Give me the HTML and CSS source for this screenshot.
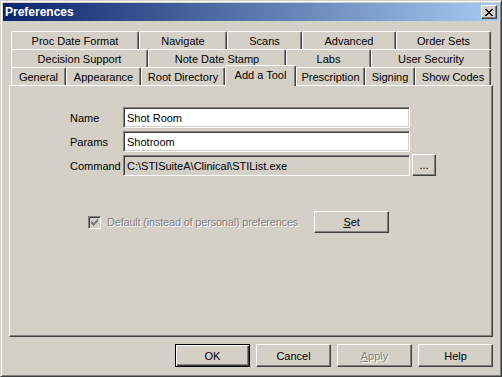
FILE: index.html
```html
<!DOCTYPE html>
<html lang="en">
<head>
  <meta charset="UTF-8" />
  <title>Preferences</title>
  <link rel="stylesheet" href="styles.css">
</head>
<body>

<div class="window">
  <div class="titlebar">
    <span class="title">Preferences</span>
    <button class="close" title="Close">
      <svg width="8" height="7" viewBox="0 0 8 7" shape-rendering="crispEdges">
        <path fill="#000" d="M0 0h2v1H0zM6 0h2v1H6zM1 1h2v1H1zM5 1h2v1H5zM2 2h4v1H2zM3 3h2v1H3zM2 4h4v1H2zM1 5h2v1H1zM5 5h2v1H5zM0 6h2v1H0zM6 6h2v1H6z"/>
      </svg>
    </button>
  </div>

  <div class="content">
    <!-- tab rows, back to front -->
    <div class="tabs">
      <div class="tab-row row1">
        <div class="tab">Proc Date Format</div>
        <div class="tab">Navigate</div>
        <div class="tab">Scans</div>
        <div class="tab">Advanced</div>
        <div class="tab">Order Sets</div>
      </div>
      <div class="tab-row row2">
        <div class="tab">Decision Support</div>
        <div class="tab">Note Date Stamp</div>
        <div class="tab">Labs</div>
        <div class="tab">User Security</div>
      </div>
      <div class="tab-row row3">
        <div class="tab">General</div>
        <div class="tab">Appearance</div>
        <div class="tab">Root Directory</div>
        <div class="tab selected">Add a Tool</div>
        <div class="tab">Prescription</div>
        <div class="tab">Signing</div>
        <div class="tab">Show Codes</div>
      </div>
    </div>

    <div class="panel">
      <div class="fields">
        <label for="toolName">Name</label>
        <input type="text" id="toolName" value="Shot Room" />
        <span></span>

        <label for="toolParams">Params</label>
        <input type="text" id="toolParams" value="Shotroom" />
        <span></span>

        <label for="toolCommand">Command</label>
        <input type="text" id="toolCommand" class="readonly" value="C:\STISuiteA\Clinical\STIList.exe" readonly />
        <button class="btn browse">...</button>
      </div>

      <div class="options">
        <label class="check disabled">
          <span class="box">
            <svg width="7" height="7" viewBox="0 0 7 7" shape-rendering="crispEdges">
              <path fill="#808080" d="M6 0h1v3H6zM5 1h1v3H5zM4 2h1v3H4zM0 2h1v3H0zM1 3h1v3H1zM2 4h1v3H2zM3 3h1v3H3z"/>
            </svg>
          </span>
          Default (instead of personal) preferences
        </label>
        <button class="btn set"><u>S</u>et</button>
      </div>
    </div>

    <div class="actions">
      <button class="btn default">OK</button>
      <button class="btn">Cancel</button>
      <button class="btn" disabled><u>A</u>pply</button>
      <button class="btn">Help</button>
    </div>
  </div>
</div>

</body>
</html>
```

FILE: styles.css
```css
body {
  margin: 0;
  padding: 0;
  background: #d4d0c8;
  font-family: 'Liberation Sans', Arial, sans-serif;
  font-size: 11px;
  color: #000;
}
.window {
  width: 502px;
  height: 377px;
  box-sizing: border-box;
  background: #d4d0c8;
  border: 1px solid;
  border-color: #d4d0c8 #404040 #404040 #d4d0c8;
  box-shadow: inset 1px 1px #fff, inset -1px -1px #808080;
  padding: 2px;
}
.titlebar {
  height: 18px;
  display: flex;
  align-items: center;
  justify-content: space-between;
  padding: 0 2px 0 2px;
  background: linear-gradient(to right, #0a246a, #a6caf0);
}
.title {
  color: #fff;
  font-weight: bold;
  font-size: 12px;
}
.close {
  width: 16px;
  height: 14px;
  padding: 0;
  display: flex;
  align-items: center;
  justify-content: center;
  background: #d4d0c8;
  border: 1px solid;
  border-color: #fff #404040 #404040 #fff;
  box-shadow: inset -1px -1px #808080;
  box-sizing: border-box;
}
.content {
  padding: 10px 6px 0 6px;
}

/* tabs */
.tabs {
  padding: 0 2px;
}
.tab-row {
  display: flex;
  height: 18px;
}
.tab {
  height: 18px;
  box-sizing: border-box;
  border-top: 1px solid #fff;
  border-left: 1px solid #fff;
  border-right: 1px solid #404040;
  border-radius: 2px 2px 0 0;
  box-shadow: inset -1px 0 #808080;
  padding-top: 2px;
  line-height: 14px;
  text-align: center;
  white-space: nowrap;
  background: #d4d0c8;
}
.row1 .tab:nth-child(1) { width: 128px; }
.row1 .tab:nth-child(2) { width: 88px; }
.row1 .tab:nth-child(3) { width: 75px; }
.row1 .tab:nth-child(4) { width: 94px; }
.row1 .tab:nth-child(5) { width: 95px; }

.row2 .tab:nth-child(1) { width: 137px; }
.row2 .tab:nth-child(2) { width: 138px; }
.row2 .tab:nth-child(3) { width: 85px; }
.row2 .tab:nth-child(4) { width: 120px; }

.row3 .tab:nth-child(1) { width: 55px; }
.row3 .tab:nth-child(2) { width: 75px; }
.row3 .tab:nth-child(3) { width: 84px; }
.row3 .tab:nth-child(4) { width: 71px; }
.row3 .tab:nth-child(5) { width: 69px; }
.row3 .tab:nth-child(6) { width: 50px; }
.row3 .tab:nth-child(7) { width: 76px; }

.tab.selected {
  height: 21px;
  margin-top: -2px;
  position: relative;
  z-index: 2;
}

/* panel */
.panel {
  height: 252px;
  box-sizing: border-box;
  border: 1px solid;
  border-color: #fff #404040 #404040 #fff;
  box-shadow: inset -1px -1px #808080;
  padding: 21px 0 0 60px;
}
.fields {
  display: grid;
  grid-template-columns: 53px 287px 26px;
  grid-auto-rows: 21px;
  row-gap: 3px;
  align-items: center;
}
.fields input {
  height: 21px;
  box-sizing: border-box;
  font-family: inherit;
  font-size: 11px;
  padding: 0 3px;
  margin: 0;
  background: #fff;
  border: 1px solid;
  border-color: #808080 #fff #fff #808080;
  box-shadow: inset 1px 1px #404040, inset -1px -1px #d4d0c8;
  outline: none;
}
.fields input.readonly {
  background: #d4d0c8;
}
.btn {
  font-family: inherit;
  font-size: 11px;
  color: #000;
  background: #d4d0c8;
  border: 1px solid;
  border-color: #fff #404040 #404040 #fff;
  box-shadow: inset -1px -1px #808080;
  box-sizing: border-box;
  padding: 0;
  margin: 0;
  width: 75px;
  height: 23px;
}
.btn.browse {
  width: 24px;
  height: 22px;
  margin-left: 2px;
  margin-top: -1px;
}
.btn.default {
  border: 1px solid #000;
  box-shadow: inset 1px 1px #fff, inset -1px -1px #404040, inset -2px -2px #808080;
}
.btn:disabled {
  color: #808080;
  text-shadow: 1px 1px #fff;
}

.options {
  display: flex;
  align-items: center;
  margin-top: 35px;
  margin-left: 18px;
}
.check {
  display: flex;
  align-items: center;
  gap: 6px;
  letter-spacing: -0.2px;
}
.check.disabled {
  color: #808080;
  text-shadow: 1px 1px #fff;
}
.box {
  width: 13px;
  height: 13px;
  box-sizing: border-box;
  border: 1px solid;
  border-color: #808080 #fff #fff #808080;
  box-shadow: inset 1px 1px #404040, inset -1px -1px #d4d0c8;
  display: flex;
  align-items: center;
  justify-content: center;
  background: #d4d0c8;
}
.btn.set {
  height: 22px;
  margin-left: 16px;
}

.actions {
  display: flex;
  justify-content: flex-end;
  gap: 6px;
  margin-top: 7px;
}
```
